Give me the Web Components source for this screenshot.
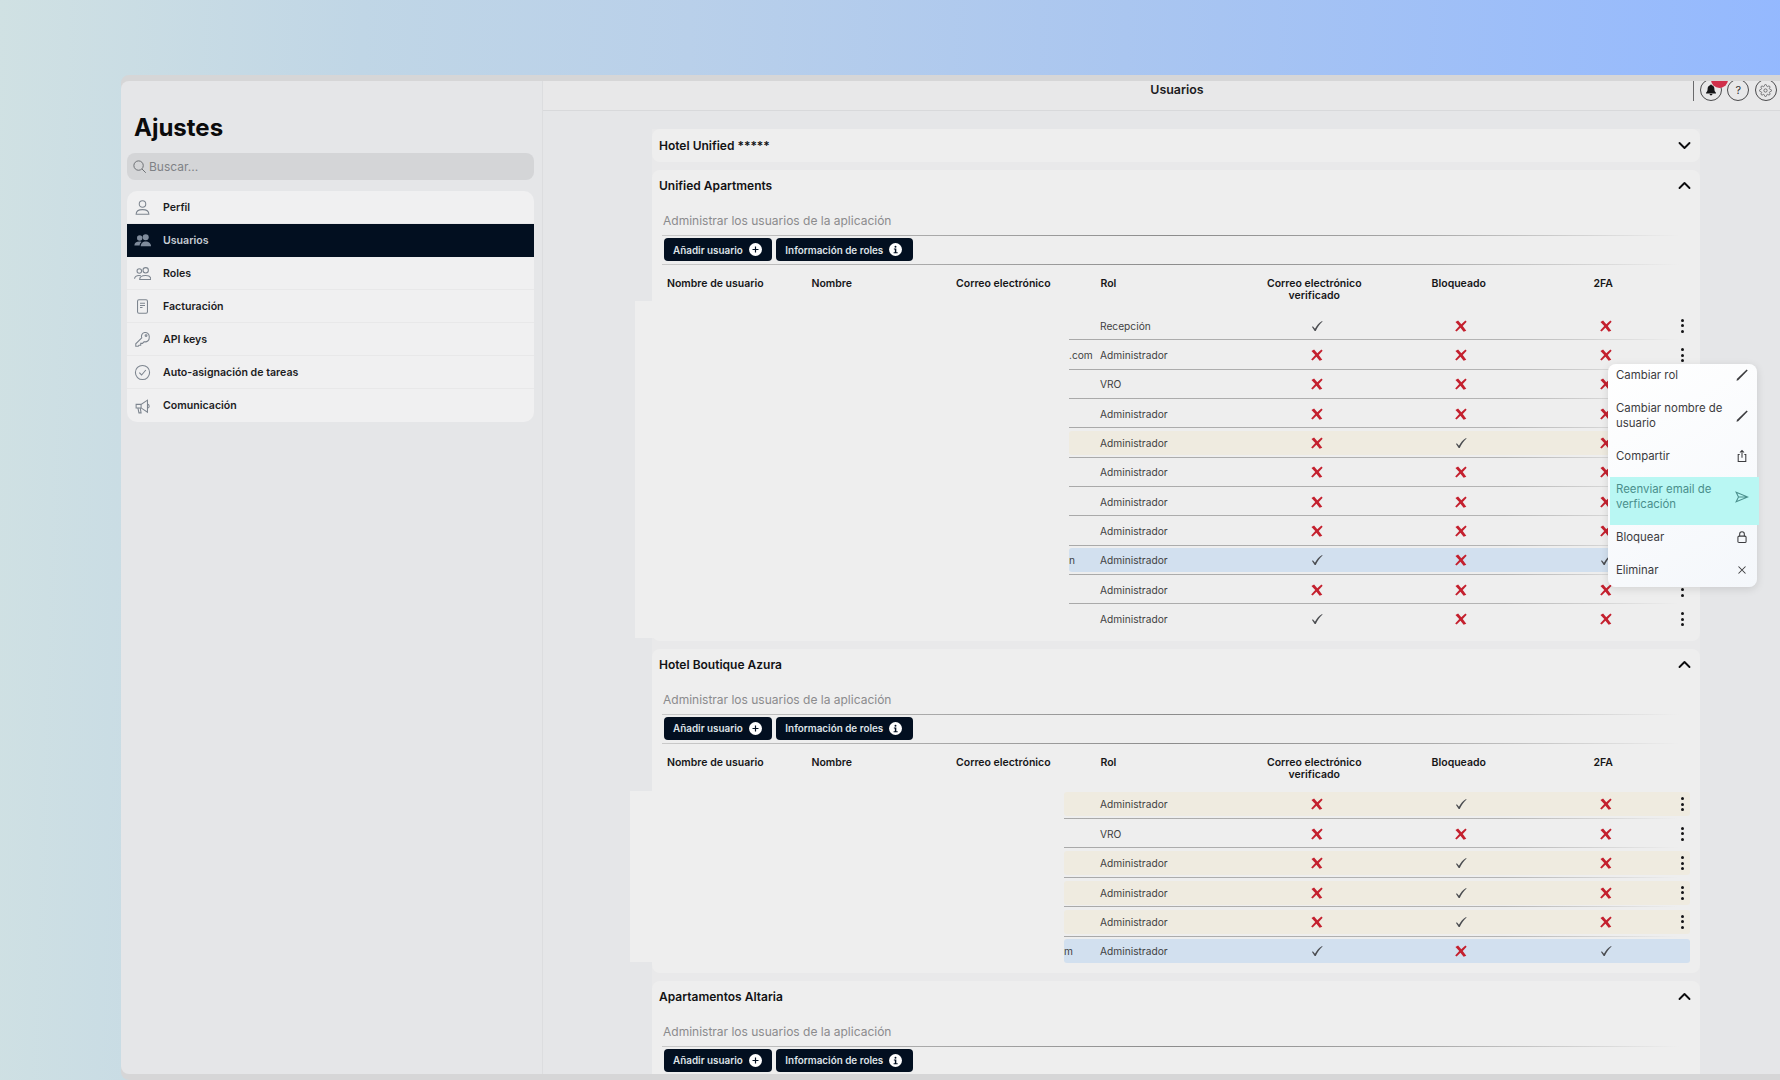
<!DOCTYPE html>
<html lang="es">
<head>
<meta charset="utf-8">
<title>Ajustes</title>
<style>
  html,body{margin:0;padding:0;}
  body{font-family:Inter,"Noto Sans",sans-serif;width:1780px;height:1080px;overflow:hidden;}
</style>
</head>
<body>
<settings-app>
  <settings-side slot="side">
    <side-item icon="person" label="Perfil"></side-item>
    <side-item icon="users" label="Usuarios" active></side-item>
    <side-item icon="roles" label="Roles"></side-item>
    <side-item icon="doc" label="Facturación"></side-item>
    <side-item icon="key" label="API keys"></side-item>
    <side-item icon="circle-check" label="Auto-asignación de tareas"></side-item>
    <side-item icon="megaphone" label="Comunicación"></side-item>
  </settings-side>
  <top-bar slot="bar" label="Usuarios"></top-bar>

  <hotel-card label="Hotel Unified *****" collapsed></hotel-card>

  <hotel-card label="Unified Apartments">
    <user-table lead="31" shift="-17" frozen-top="-10" frozen-bottom="-4">
      <user-row role="Recepción" mail="y" locked="n" fa="n"></user-row>
      <user-row role="Administrador" frag=".com" mail="n" locked="n" fa="n"></user-row>
      <user-row role="VRO" mail="n" locked="n" fa="n"></user-row>
      <user-row role="Administrador" mail="n" locked="n" fa="n"></user-row>
      <user-row role="Administrador" tint="beige" mail="n" locked="y" fa="n"></user-row>
      <user-row role="Administrador" mail="n" locked="n" fa="n"></user-row>
      <user-row role="Administrador" mail="n" locked="n" fa="n"></user-row>
      <user-row role="Administrador" mail="n" locked="n" fa="n"></user-row>
      <user-row role="Administrador" frag="n" tint="blue" mail="y" locked="n" fa="y" nomenu></user-row>
      <user-row role="Administrador" mail="n" locked="n" fa="n"></user-row>
      <user-row role="Administrador" mail="y" locked="n" fa="n" last></user-row>
    </user-table>
  </hotel-card>

  <hotel-card label="Hotel Boutique Azura">
    <user-table lead="36" shift="-22" frozen-top="1" frozen-bottom="4">
      <user-row role="Administrador" tint="beige" mail="n" locked="y" fa="n"></user-row>
      <user-row role="VRO" mail="n" locked="n" fa="n"></user-row>
      <user-row role="Administrador" tint="beige" mail="n" locked="y" fa="n"></user-row>
      <user-row role="Administrador" tint="beige" mail="n" locked="y" fa="n"></user-row>
      <user-row role="Administrador" tint="beige" mail="n" locked="y" fa="n"></user-row>
      <user-row role="Administrador" frag="m" tint="blue" mail="y" locked="n" fa="y" nomenu last></user-row>
    </user-table>
  </hotel-card>

  <hotel-card label="Apartamentos Altaria">
    <user-table></user-table>
  </hotel-card>

  <action-menu slot="over"></action-menu>
</settings-app>

<script>
const ICONS = {
  person: `<circle cx="12" cy="7" r="4.6"/><path d="M3 21.5c0-4.200 4-6.500 9-6.500s9 2.300 9 6.500z"/>`,
  users: `<g fill="currentColor" stroke="none"><circle cx="8" cy="8.500" r="3.800"/><circle cx="16.500" cy="7.500" r="4.300"/><path d="M.5 19c0-3.800 3-5.500 7-5.500 1.200 0 2.300.2 3.200.5-1.700 1.100-2.700 2.800-2.700 5z"/><path d="M9.500 20c0-4 3-6.500 7-6.500s7.500 2.500 7.500 6.500z"/></g>`,
  roles: `<circle cx="7.500" cy="8.500" r="3.200"/><circle cx="16.500" cy="7.500" r="3.800"/><path d="M.8 19.500c0-3 2.700-4.800 6.200-4.800 1 0 1.900.1 2.700.4"/><path d="M8 20.500c0-3.700 3.800-5.600 8.300-5.600s7.500 1.900 7.500 5.600z"/>`,
  doc: `<rect x="5" y="2.500" width="14" height="19" rx="2"/><path d="M8.500 7.500h7M8.500 10.500h7M8.500 13.500h3.500"/>`,
  key: `<path d="M21.500 7.500a5.500 5.500 0 1 0-10.600 2.100L2.500 18v3.500H6l1-1.500h2.500v-2.500H12l2.400-2.400a5.500 5.500 0 0 0 7.100-5.600z"/><circle cx="17" cy="6.500" r="1.300"/>`,
  'circle-check': `<circle cx="12" cy="12" r="10"/><path d="M7.500 12.300l3.200 3.200 6-7"/>`,
  megaphone: `<path d="M3 9h7l9-6v17l-9-6H3z"/><path d="M10 9v5M5.500 14l1.500 7h3l-1.200-7M19 8.500c1.500.5 2.500 1.600 2.500 3s-1 2.500-2.500 3"/>`,
  search: `<circle cx="10.500" cy="10.500" r="7.500"/><path d="M16 16l6 6"/>`,
  pencil: `<path fill="currentColor" stroke="none" d="M2.500 22l1-3.500L20 2.500l1.800 1.800L5.500 20.800z"/>`,
  share: `<path d="M8 9.500H5.500v12h13v-12H16M12 15V2.500M8.500 6L12 2.500 15.500 6"/>`,
  send: `<path d="M2 4l20 8-20 8 4-8zM6 12h16"/>`,
  lock: `<rect x="5" y="10.500" width="14" height="11" rx="2"/><path d="M8 10.500V7a4 4 0 0 1 8 0v3.500"/>`,
  close: `<path d="M6 6l12 12M18 6L6 18"/>`,
  bell: `<path fill="currentColor" stroke="none" d="M12 2.500c-.9 0-1.500.6-1.500 1.400-2.700.7-4.300 2.900-4.300 5.800 0 3.700-1.200 5.400-2.700 6.800v1.300h17v-1.300c-1.500-1.400-2.700-3.100-2.700-6.800 0-2.900-1.600-5.100-4.300-5.800 0-.8-.6-1.400-1.500-1.400zM9.500 19c.2 1.400 1.200 2.500 2.500 2.500s2.300-1.100 2.500-2.500z"/>`,
  gear: `<circle cx="12" cy="12" r="3"/><path d="M19.400 15a1.650 1.650 0 0 0 .33 1.820l.06.06a2 2 0 1 1-2.830 2.830l-.06-.06a1.650 1.650 0 0 0-1.820-.33 1.650 1.650 0 0 0-1 1.510V21a2 2 0 1 1-4 0v-.09A1.650 1.650 0 0 0 9 19.400a1.650 1.650 0 0 0-1.820.33l-.06.06a2 2 0 1 1-2.830-2.830l.06-.06a1.650 1.650 0 0 0 .33-1.820 1.650 1.650 0 0 0-1.510-1H3a2 2 0 1 1 0-4h.09A1.650 1.650 0 0 0 4.600 9a1.650 1.650 0 0 0-.33-1.820l-.06-.06a2 2 0 1 1 2.830-2.830l.06.06a1.650 1.650 0 0 0 1.820.33H9a1.650 1.650 0 0 0 1-1.510V3a2 2 0 1 1 4 0v.09a1.650 1.650 0 0 0 1 1.510 1.650 1.650 0 0 0 1.820-.33l.06-.06a2 2 0 1 1 2.830 2.830l-.06.06a1.650 1.650 0 0 0-.33 1.820V9a1.650 1.650 0 0 0 1.510 1H21a2 2 0 1 1 0 4h-.09a1.650 1.650 0 0 0-1.510 1z"/>`,
  'chevron-down': `<path d="M4 8l8 8 8-8" stroke-linecap="round" stroke-linejoin="round"/>`,
  'chevron-up': `<path d="M4 16l8-8 8 8" stroke-linecap="round" stroke-linejoin="round"/>`,
  yes: `<path fill="currentColor" stroke="none" d="M3.500 13.500l1.300-1.200 3.700 4.300C11.500 11.300 15.500 6.700 20.800 3.500l.7.800c-4.800 4.300-8.600 10-11.700 16.200h-1.800z"/>`,
  no: `<path fill="currentColor" stroke="none" d="M2.500 5L7 2.500l5.500 6.500 7-6.500 2.200 2L15 12l6 8-4.500 2-5.500-7-6.500 6.500-2.500-2L9 12z"/>`,
  plus: `<circle cx="12" cy="12" r="12" fill="#fff" stroke="none"/><path d="M12 6.500v11M6.500 12h11" stroke="#020f20" stroke-width="2.200"/>`,
  info: `<circle cx="12" cy="12" r="12" fill="#fff" stroke="none"/><path fill="#020f20" stroke="none" d="M9 10h4.500v7H16v2H8.500v-2h2.300v-5H9z"/><circle cx="12" cy="6.800" r="1.800" fill="#020f20" stroke="none"/>`
};

customElements.define('ui-icon', class extends HTMLElement{
  constructor(){
    super();
    this.shadow = this.attachShadow({mode:'open'});
  }
  connectedCallback(){
    const size = this.getAttribute('size') || 16;
    const stroke = this.getAttribute('stroke') || 1.5;
    this.shadow.innerHTML = `
      <style>
        :host{display:inline-flex;flex:none;line-height:0;}
      </style>
      <svg width="${size}" height="${size}" viewBox="0 0 24 24" fill="none" stroke="currentColor" stroke-width="${stroke}">${ICONS[this.getAttribute('name')]}</svg>
    `;
  }
});

customElements.define('settings-app', class extends HTMLElement{
  constructor(){
    super();
    this.shadow = this.attachShadow({mode:'open'});
  }
  connectedCallback(){
    this.shadow.innerHTML = `
      <style>
        :host{
          display:block;box-sizing:border-box;width:1780px;height:1080px;padding:75px 0 0 121px;
          background:linear-gradient(92deg,#d0e1e3 0%,#c0d6e6 20%,#b9d0ea 38%,#aac6f0 62%,#93b8ff 100%);
          font-family:Inter,"Noto Sans",sans-serif;
        }
        .window{
          position:relative;height:1005px;box-sizing:border-box;padding:6px 0;
          background:#d6d6d7;border-radius:8px 0 0 8px;
        }
        .inner{
          display:flex;height:100%;overflow:hidden;background:#e5e6e8;border-radius:8px 0 0 8px;
        }
        .main{flex:1;min-width:0;display:flex;flex-direction:column;}
        .scroll{
          flex:1;min-height:0;overflow:hidden;padding:18px 80px 0 109px;
        }
        .stack{display:flex;flex-direction:column;gap:8px;background:#e9e9ea;}
      </style>
      <div class="window">
        <div class="inner">
          <slot name="side"></slot>
          <div class="main">
            <slot name="bar"></slot>
            <div class="scroll"><div class="stack"><slot></slot></div></div>
          </div>
        </div>
        <slot name="over"></slot>
      </div>
    `;
  }
});

customElements.define('settings-side', class extends HTMLElement{
  constructor(){
    super();
    this.shadow = this.attachShadow({mode:'open'});
  }
  connectedCallback(){
    this.shadow.innerHTML = `
      <style>
        :host{
          display:block;flex:none;width:422px;box-sizing:border-box;padding:31px 8px 0 6px;
          border-right:1px solid #dcdddf;
        }
        h1{margin:0 0 9px 7px;font:700 24px/32px Inter,sans-serif;color:#0b0b0c;}
        .search{
          display:flex;align-items:center;gap:2px;height:27px;padding-left:5px;
          background:#d4d5d7;border-radius:8px;color:#7f8286;font-size:12px;
        }
        .search ui-icon{color:#666a6e;}
        .menu{
          margin-top:11px;background:#f0f0f1;border-radius:10px;overflow:hidden;
        }
      </style>
      <h1>Ajustes</h1>
      <div class="search"><ui-icon name="search" size="15"></ui-icon><span>Buscar...</span></div>
      <div class="menu"><slot></slot></div>
    `;
  }
});

customElements.define('side-item', class extends HTMLElement{
  constructor(){
    super();
    this.shadow = this.attachShadow({mode:'open'});
  }
  connectedCallback(){
    this.shadow.innerHTML = `
      <style>
        :host{
          display:flex;align-items:center;box-sizing:border-box;height:32.96px;padding:2px 0 0 7px;
          border-bottom:1px solid #e8e8e9;color:#1c1c1e;
          font:600 10.6px/14px Inter,sans-serif;
        }
        :host([active]){background:#020f20;color:#c6ccd4;border-bottom-color:#020f20;}
        :host(:last-child){border-bottom:0;}
        ui-icon{width:17px;margin-right:12px;justify-content:center;color:#7d858f;}
        :host([active]) ui-icon{color:#7f8b9b;}
      </style>
      <ui-icon name="${this.getAttribute('icon')}" size="17"></ui-icon>
      <span>${this.getAttribute('label')}</span>
    `;
  }
});

customElements.define('top-bar', class extends HTMLElement{
  constructor(){
    super();
    this.shadow = this.attachShadow({mode:'open'});
  }
  connectedCallback(){
    this.shadow.innerHTML = `
      <style>
        :host{
          display:flex;flex:none;box-sizing:border-box;height:30px;background:#e8e8e9;
          border-bottom:1px solid #d8d9db;overflow:hidden;
        }
        .title{
          flex:1;padding:1px 0 0 118px;text-align:center;color:#1c1c1e;
          font:600 12.4px/16px Inter,sans-serif;
        }
        .tools{display:flex;gap:5.3px;height:20px;width:80px;border-left:1px solid #6a6a6c;padding-left:6px;}
        .round{
          position:relative;flex:none;width:22px;height:22px;margin-top:-2px;box-sizing:border-box;
          display:flex;align-items:center;justify-content:center;
          border:1px solid #4a4a4c;border-radius:50%;color:#333;font:400 11px/1 Inter,sans-serif;
        }
        .badge{position:absolute;left:10px;top:-9px;width:17px;height:17px;background:#d0304b;border-radius:50%;}
        .gear{color:#5a5a5c;}
        .bell{color:#151517;}
        .bell ui-icon{position:relative;z-index:1;}
      </style>
      <div class="title">${this.getAttribute('label')}</div>
      <div class="tools">
        <div class="round bell"><ui-icon name="bell" size="14"></ui-icon><span class="badge"></span></div>
        <div class="round">?</div>
        <div class="round gear"><ui-icon name="gear" size="13"></ui-icon></div>
      </div>
    `;
  }
});

customElements.define('hotel-card', class extends HTMLElement{
  constructor(){
    super();
    this.shadow = this.attachShadow({mode:'open'});
  }
  connectedCallback(){
    const collapsed = this.hasAttribute('collapsed');
    this.shadow.innerHTML = `
      <style>
        :host{display:block;background:#eeeeee;border-radius:8px;padding-bottom:7px;}
        :host([collapsed]){padding-bottom:0;}
        header{
          display:flex;align-items:center;justify-content:space-between;height:33px;box-sizing:border-box;padding:0 8px ${collapsed ? 0 : 1.5}px 7px;
          font:600 12px/16px Inter,sans-serif;color:#121214;
        }
        ui-icon{color:#0c0c0e;}
      </style>
      <header>
        <span>${this.getAttribute('label')}</span>
        <ui-icon name="${collapsed ? 'chevron-down' : 'chevron-up'}" size="15" stroke="3"></ui-icon>
      </header>
      <slot></slot>
    `;
  }
});

customElements.define('user-table', class extends HTMLElement{
  constructor(){
    super();
    this.shadow = this.attachShadow({mode:'open'});
  }
  connectedCallback(){
    const lead = this.getAttribute('lead') || 31;
    const shift = this.getAttribute('shift') || -17;
    const top = this.getAttribute('frozen-top') || 0;
    const bottom = this.getAttribute('frozen-bottom') || 0;
    const hasRows = this.children.length > 0;
    this.shadow.innerHTML = `
      <style>
        :host{display:block;padding-top:10px;--lead:${lead}px;}
        .sub{margin-left:11px;font:400 12px/16px Inter,sans-serif;color:#8b8b8d;}
        .rule{height:1px;margin:6px 20px 0 10px;background:linear-gradient(90deg,#c9c9c9,#8c8c8c 50%,#a8a8a8 75%,rgba(200,200,200,0) 100%);}
        .tools{display:flex;gap:4px;margin:2px 0 3px 12px;}
        .btn{
          display:flex;align-items:center;gap:6px;height:23px;padding:0 10.500px 0 9px;box-sizing:border-box;
          background:#020f20;border-radius:4px;color:#dfe3e8;font:600 9.9px/14px Inter,sans-serif;
        }
        .head{
          display:grid;grid-template-columns:144.5px 144.5px 144.5px 144.5px 144.5px 144.5px 144.5px;
          height:46px;box-sizing:border-box;padding:13px 0 0 15px;
          font:600 10.5px/12px Inter,sans-serif;color:#161618;
        }
        .c{text-align:center;padding-right:6px;}
        .body{display:flex;margin-left:${shift}px;}
        .frozen{flex:none;width:434px;margin:${top}px 0 ${bottom}px;background:#eeeeee;}
        .rows{flex:1;min-width:0;margin-right:10px;}
      </style>
      <div class="sub">Administrar los usuarios de la aplicación</div>
      <div class="rule"></div>
      <div class="tools">
        <div class="btn">Añadir usuario <ui-icon name="plus" size="13"></ui-icon></div>
        <div class="btn">Información de roles <ui-icon name="info" size="13"></ui-icon></div>
      </div>
      <div class="rule" style="margin-top:0"></div>
      ${hasRows ? `
      <div class="head">
        <div>Nombre de usuario</div><div>Nombre</div><div>Correo electrónico</div><div>Rol</div>
        <div class="c">Correo electrónico verificado</div><div class="c">Bloqueado</div><div class="c">2FA</div>
      </div>
      <div class="body">
        <div class="frozen"></div>
        <div class="rows"><slot></slot></div>
      </div>` : ''}
    `;
  }
});

customElements.define('user-row', class extends HTMLElement{
  constructor(){
    super();
    this.shadow = this.attachShadow({mode:'open'});
  }
  mark(v){
    return v === 'y'
      ? `<span class="m yes"><ui-icon name="yes" size="14"></ui-icon></span>`
      : `<span class="m no"><ui-icon name="no" size="14"></ui-icon></span>`;
  }
  connectedCallback(){
    this.shadow.innerHTML = `
      <style>
        :host{
          display:block;height:29.35px;box-sizing:border-box;padding-top:2.7px;
          border-bottom:1px solid transparent;
          border-image:linear-gradient(90deg,#a9a9a9,#b4b4b4 70%,rgba(190,190,190,0) 98%) 1;
        }
        :host([last]){border-image:none;border-bottom:0;}
        .cells{
          display:grid;grid-template-columns:var(--lead) 144.5px 144.5px 144.5px 144.5px 1fr;align-items:center;
          height:24px;border-radius:3px;font:400 10.2px/14px Inter,sans-serif;color:#3f3f42;
        }
        :host([tint=beige]) .cells{background:#efebe0;}
        :host([tint=blue]) .cells{background:#d2e0ef;}
        .frag{overflow:hidden;white-space:nowrap;}
        .m{display:flex;justify-content:center;}
        .yes{color:#4a4c50;}
        .no{color:#c4202e;}
        .dots{display:flex;flex-direction:column;gap:2.500px;margin-left:2.500px;}
        .dots i{display:block;width:3px;height:3px;border-radius:50%;background:#141416;}
      </style>
      <div class="cells">
        <span class="frag">${this.getAttribute('frag') || ''}</span>
        <span>${this.getAttribute('role')}</span>
        ${this.mark(this.getAttribute('mail'))}
        ${this.mark(this.getAttribute('locked'))}
        ${this.mark(this.getAttribute('fa'))}
        ${this.hasAttribute('nomenu') ? '<span></span>' : '<span class="dots"><i></i><i></i><i></i></span>'}
      </div>
    `;
  }
});

customElements.define('action-menu', class extends HTMLElement{
  constructor(){
    super();
    this.shadow = this.attachShadow({mode:'open'});
  }
  connectedCallback(){
    const items = [
      ['Cambiar rol','pencil','top'],
      ['Cambiar nombre de usuario','pencil','two'],
      ['Compartir','share',''],
      ['Reenviar email de verficación','send','two hot'],
      ['Bloquear','lock',''],
      ['Eliminar','close','']
    ];
    this.shadow.innerHTML = `
      <style>
        :host{
          position:absolute;left:1487px;top:289px;width:149px;height:223px;box-sizing:border-box;z-index:5;
          background:linear-gradient(150deg,#ffffff,#f4f7fb);border-radius:8px;
          box-shadow:0 2px 8px rgba(0,0,0,.12);
          font:400 11.4px/14.3px Inter,sans-serif;color:#3c3c3f;
        }
        .item{
          position:relative;display:flex;align-items:center;justify-content:space-between;
          box-sizing:border-box;padding:0 8px 0 8px;height:33.3px;
        }
        .top{margin-top:-5.4px;}
        .item span,.item ui-icon{position:relative;}
        .item span{max-width:112px;}
        .two{height:47.6px;}
        .hot{color:#4a8f8c;}
        .hot::before{content:'';position:absolute;left:2px;right:-2px;top:4px;bottom:-5px;background:#b9f7f3;}
      </style>
      ${items.map(([t,i,c]) => `<div class="item ${c}"><span>${t}</span><ui-icon name="${i}" size="14" stroke="1.800"></ui-icon></div>`).join('')}
    `;
  }
});
</script>
</body>
</html>
